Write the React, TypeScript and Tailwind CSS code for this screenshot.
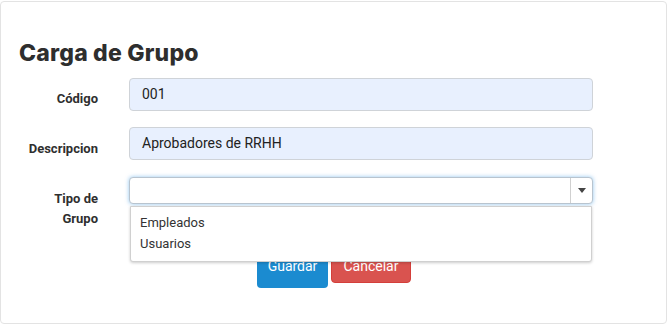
import React from "react";

export default function App() {
  const label = "w-[79px] shrink-0 text-right text-[13px] font-bold text-[#2f2f2f] leading-[20px]";
  return (
    <div className="w-[668px] h-[326px] bg-white pt-[1px]" style={{ fontFamily: "Roboto, 'Liberation Sans', sans-serif" }}>
      <div className="w-[667px] h-[323px] border border-[#e3e3e3] rounded-[4px] pl-[18px] pt-[37px]">
        <h1 className="text-[23px] font-extrabold text-[#2e2e2e] leading-[28px] tracking-[0.2px]" style={{ fontFamily: "Inter, 'Liberation Sans', sans-serif" }}>
          Carga de Grupo
        </h1>
        <div className="mt-[11px] flex flex-col">
          <div className="flex items-start gap-[31px]">
            <div className={label + " pt-[11px]"}>Código</div>
            <div className="w-[464px] h-[33px] rounded-[4px] border border-[#cfd3d8] bg-[#e8f0fe] px-[12px] flex items-center text-[14px] text-[#222]">
              001
            </div>
          </div>
          <div className="mt-[16px] flex items-start gap-[31px]">
            <div className={label + " pt-[12px]"}>Descripcion</div>
            <div className="w-[464px] h-[33px] rounded-[4px] border border-[#cfd3d8] bg-[#e8f0fe] px-[12px] flex items-center text-[14px] text-[#222]">
              Aprobadores de RRHH
            </div>
          </div>
          <div className="mt-[17px] flex items-start gap-[31px]">
            <div className={label + " pt-[12px]"}>
              Tipo de
              <br />
              Grupo
            </div>
            <div className="relative w-[464px]">
              <div className="h-[27px] rounded-[4px] border border-[#b8c4cf] bg-white flex justify-end shadow-[0_0_4px_rgba(102,175,233,0.7)]">
                <div className="w-[22px] border-l border-[#d0d0d0] flex items-center justify-center">
                  <div className="w-0 h-0 border-l-[4px] border-r-[4px] border-t-[5px] border-l-transparent border-r-transparent border-t-[#444]" />
                </div>
              </div>
              <div className="absolute left-[1px] top-[29px] w-[462px] h-[56px] bg-white border border-[#d0d0d0] rounded-b-[3px] shadow-[0_1px_3px_rgba(0,0,0,0.2)] z-10 pt-[5px] text-[13px] text-[#333]">
                <div className="pl-[9px] leading-[21px]">Empleados</div>
                <div className="pl-[9px] leading-[21px]">Usuarios</div>
              </div>
            </div>
          </div>
          <div className="mt-[24px] ml-[238px] flex items-start gap-[3px]">
            <div className="w-[71px] h-[35px] rounded-[4px] bg-[#1b8bd0] text-white text-[14px] flex items-center justify-center pb-[9px]">
              Guardar
            </div>
            <div className="w-[80px] h-[30px] rounded-[4px] bg-[#d9534f] border border-[#d43f3a] text-white text-[14px] flex items-center justify-center pb-[4px]">
              Cancelar
            </div>
          </div>
        </div>
      </div>
    </div>
  );
}
